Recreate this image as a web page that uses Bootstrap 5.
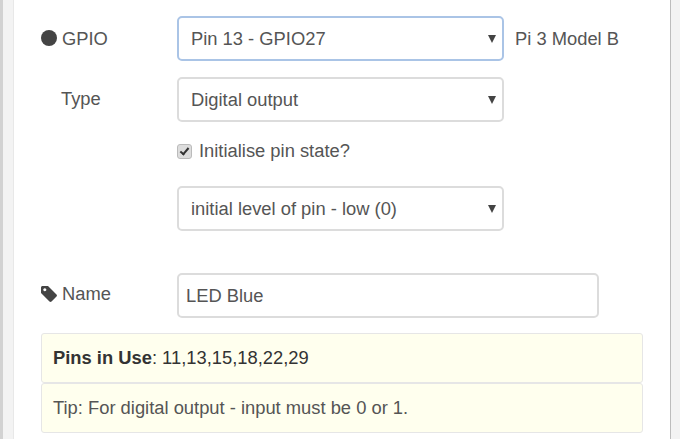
<!DOCTYPE html>
<html lang="en">
<head>
    <meta charset="UTF-8">
    <meta name="viewport" content="width=device-width, initial-scale=1.0">
    <title>GPIO node</title>
    <link href="https://cdn.jsdelivr.net/npm/bootstrap@5.3.0/dist/css/bootstrap.min.css" rel="stylesheet">
    <style>
        html, body {
            height: 100%;
        }
        body {
            background-color: #f3f3f3;
            border-left: 3px solid #d2d2d2;
            font-family: "Liberation Sans", Arial, sans-serif;
            font-size: 18.35px;
            color: #555;
            overflow: hidden;
        }
        .tray-panel {
            width: 658px;
            height: 439px;
            margin-left: 10px;
            padding: 16px 0 0 27px;
            background-color: #fff;
            border-left: 1px solid #e8e8e8;
            border-right: 1px solid #bdbdbd;
        }
        .form-line {
            display: flex;
            align-items: center;
        }
        .line-label {
            width: 136px;
            flex: none;
            display: flex;
            align-items: center;
            gap: 5px;
        }
        .label-indent {
            padding-left: 20px;
            padding-bottom: 2px;
        }
        .label-lifted {
            padding-bottom: 3px;
        }
        .pick-box {
            position: relative;
            width: 327px;
            height: 45px;
        }
        .pick-box .form-select {
            height: 100%;
            padding: 0 30px 0 12px;
            font-size: 18.35px;
            color: #555;
            border: 2px solid #dcdcdc;
            border-radius: 5px;
            background-image: none;
        }
        .pick-box::after {
            content: "";
            position: absolute;
            right: 8px;
            top: 19px;
            border-left: 4px solid transparent;
            border-right: 4px solid transparent;
            border-top: 8px solid #444;
        }
        .pick-focus .form-select {
            border-color: #aac4e6;
        }
        .pin-dot {
            width: 16px;
            height: 16px;
            border-radius: 50%;
            background-color: #444;
            flex: none;
        }
        .board-text {
            margin-left: 11px;
        }
        .init-check {
            margin: 18px 0 24px 136px;
            height: 22px;
            display: flex;
            align-items: center;
            gap: 7px;
        }
        .init-check .form-check-input {
            width: 15px;
            height: 15px;
            margin: 0;
            background-color: #ddd;
            border: 1px solid #bbb;
            border-radius: 3px;
            background-image: none;
            display: grid;
            place-content: center;
            opacity: 1;
        }
        .init-check .form-check-input::before {
            content: "";
            width: 5px;
            height: 9px;
            margin-top: -2px;
            border-right: 2.5px solid #333;
            border-bottom: 2.5px solid #333;
            transform: rotate(40deg);
        }
        .init-check label {
            margin: 0;
        }
        .name-line {
            margin-bottom: 15px;
        }
        .low-line {
            margin-bottom: 42px;
        }
        .name-input.form-control {
            width: 422px;
            height: 45px;
            padding: 0 7px;
            font-size: 18.35px;
            color: #555;
            border: 2px solid #dcdcdc;
            border-radius: 5px;
        }
        .tip-box {
            width: 602px;
            height: 50px;
            margin: 0;
            padding: 0 11px;
            display: flex;
            align-items: center;
            background-color: #ffffee;
            border: 1px solid #e6e6e6;
            border-radius: 3px;
            color: #555;
        }
        .tip-box strong {
            color: #333;
        }
        .tip-box span {
            color: #333;
            white-space: pre;
        }
    </style>
</head>
<body>
    <div class="tray-panel">
        <div class="form-line mb-3">
            <div class="line-label">
                <span class="pin-dot"></span>
                <span>GPIO</span>
            </div>
            <div class="pick-box pick-focus">
                <select class="form-select"><option>Pin 13 - GPIO27</option></select>
            </div>
            <span class="board-text">Pi 3 Model B</span>
        </div>

        <div class="form-line">
            <div class="line-label label-indent">Type</div>
            <div class="pick-box">
                <select class="form-select"><option>Digital output</option></select>
            </div>
        </div>

        <div class="init-check">
            <input class="form-check-input" type="checkbox" id="init-state" checked>
            <label for="init-state">Initialise pin state?</label>
        </div>

        <div class="form-line low-line">
            <div class="line-label"></div>
            <div class="pick-box">
                <select class="form-select"><option>initial level of pin - low (0)</option></select>
            </div>
        </div>

        <div class="form-line name-line">
            <div class="line-label label-lifted">
                <svg width="16" height="16" viewBox="0 0 16 16" aria-hidden="true">
                    <path fill="#444" fill-rule="evenodd" d="M0 1.5C0 .7.7 0 1.5 0H7l8.500 8.500c.6.6.6 1.400 0 2L10.500 15.500c-.6.6-1.400.6-2 0L0 7zM3.800 2.300a1.500 1.500 0 1 0 .01 0z"/>
                </svg>
                <span>Name</span>
            </div>
            <input class="form-control name-input" type="text" value="LED Blue">
        </div>

        <div class="tip-box"><strong>Pins in Use</strong><span>: 11,13,15,18,22,29</span></div>
        <div class="tip-box">Tip: For digital output - input must be 0 or 1.</div>
    </div>

    <script src="https://cdn.jsdelivr.net/npm/bootstrap@5.3.0/dist/js/bootstrap.bundle.min.js"></script>
</body>
</html>
